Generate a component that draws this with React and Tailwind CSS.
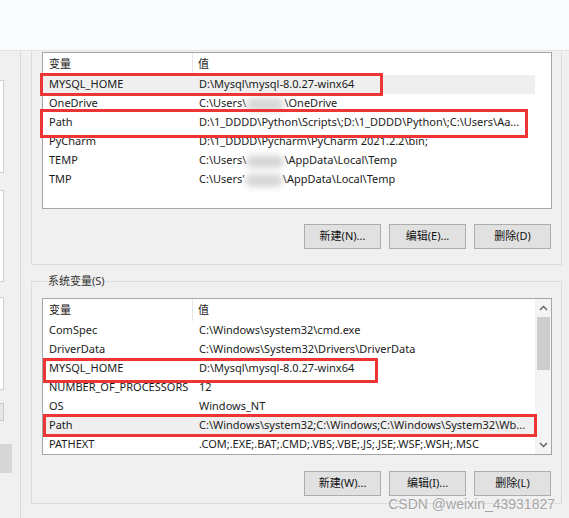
import React from "react";

const userVars = [
  { name: "MYSQL_HOME", value: "D:\\Mysql\\mysql-8.0.27-winx64", selected: true },
  { name: "OneDrive", value: ["C:\\Users\\", "\\OneDrive"] },
  { name: "Path", value: "D:\\1_DDDD\\Python\\Scripts\\;D:\\1_DDDD\\Python\\;C:\\Users\\Aa..." },
  { name: "PyCharm", value: "D:\\1_DDDD\\Pycharm\\PyCharm 2021.2.2\\bin;" },
  { name: "TEMP", value: ["C:\\Users\\", "\\AppData\\Local\\Temp"] },
  { name: "TMP", value: ["C:\\Users'", "\\AppData\\Local\\Temp"] },
];

const systemVars = [
  { name: "ComSpec", value: "C:\\Windows\\system32\\cmd.exe" },
  { name: "DriverData", value: "C:\\Windows\\System32\\Drivers\\DriverData" },
  { name: "MYSQL_HOME", value: "D:\\Mysql\\mysql-8.0.27-winx64" },
  { name: "NUMBER_OF_PROCESSORS", value: "12" },
  { name: "OS", value: "Windows_NT" },
  { name: "Path", value: "C:\\Windows\\system32;C:\\Windows;C:\\Windows\\System32\\Wb...", selected: true },
  { name: "PATHEXT", value: ".COM;.EXE;.BAT;.CMD;.VBS;.VBE;.JS;.JSE;.WSF;.WSH;.MSC" },
];

// blurred-out user name
const Smudge = () => (
  <span className="inline-block w-[38px] h-[13px] align-middle bg-[#d6d6d6] rounded-full blur-[3px]" />
);

const Value = ({ value }) => {
  if (Array.isArray(value)) {
    return (
      <>
        {value[0]}
        <Smudge />
        {value[1]}
      </>
    );
  }
  return value;
};

const VarList = ({ rows, scroll, marks }) => (
  <div className="relative h-[157px] border border-[#a6a6a6] bg-white flex min-w-0">
    <div className="flex-1 min-w-0 overflow-hidden flex flex-col">
      {/* header */}
      <div className="h-[22px] flex items-center shrink-0">
        <div className="w-[150px] shrink-0 h-full pl-[6px] flex items-center border-r border-[#e5e5e5]">变量</div>
        <div className="pl-[5px]">值</div>
      </div>
      {rows.map((r) => (
        <div
          key={r.name}
          className={`h-[19px] flex items-center shrink-0 whitespace-nowrap ${r.selected ? "bg-[#efefef]" : ""}`}
        >
          <div className="w-[150px] shrink-0 pl-[6px]">{r.name}</div>
          <div className="pl-[6px]">
            <Value value={r.value} />
          </div>
        </div>
      ))}
    </div>
    {/* scrollbar column */}
    <div className={`w-[16px] shrink-0 flex flex-col items-center ${scroll ? "bg-[#f4f4f4]" : ""}`}>
      {scroll && (
        <>
          <svg width="9" height="6" viewBox="0 0 9 6" className="mt-[6px]">
            <path d="M1 5 L4.5 1.5 L8 5" stroke="#606060" strokeWidth="1.4" fill="none" />
          </svg>
          <div className="mt-[6px] w-[13px] h-[53px] bg-[#cdcdcd]" />
          <div className="flex-1" />
          <svg width="9" height="6" viewBox="0 0 9 6" className="mb-[6px]">
            <path d="M1 1 L4.5 4.5 L8 1" stroke="#606060" strokeWidth="1.4" fill="none" />
          </svg>
        </>
      )}
    </div>
    {/* red annotation boxes */}
    {marks.map((m, i) => (
      <div key={i} className={`absolute border-[3px] border-[#ee3535] ${m}`} />
    ))}
  </div>
);

const Buttons = ({ labels }) => (
  <div className="flex justify-end gap-[8px] pr-[1px]">
    {labels.map((l) => (
      <div
        key={l}
        className="w-[77px] h-[25px] flex items-center justify-center bg-[#e1e1e1] border border-[#adadad] text-[#111]"
      >
        {l}
      </div>
    ))}
  </div>
);

export default function App() {
  return (
    <div
      className="relative w-[569px] h-[518px] overflow-hidden bg-[#f0f0f0] text-[11px] text-[#1b1b1b] flex flex-col"
      style={{ fontFamily: '"Noto Sans", "Noto Sans CJK SC", sans-serif' }}
    >
      {/* top strip */}
      <div className="h-[51px] shrink-0 bg-[#fafbfc] border-b border-[#e4e4e4]" />

      <div className="flex-1 flex min-w-0">
        {/* background window edge */}
        <div className="w-[21px] shrink-0 border-r border-[#d9d9d9] flex flex-col">
          <div className="w-[4px] h-[29px]" />
          <div className="w-[4px] h-[93px] bg-white border-r border-y border-[#d0d0d0]" />
          <div className="w-[4px] h-[17px]" />
          <div className="w-[4px] h-[92px] bg-white border-r border-y border-[#d0d0d0]" />
          <div className="w-[4px] h-[15px]" />
          <div className="w-[4px] h-[93px] bg-white border-r border-y border-[#d0d0d0]" />
          <div className="w-[4px] h-[13px]" />
          <div className="w-[4px] h-[18px] bg-[#e6e6e6] border-r border-y border-[#c8c8c8]" />
          <div className="w-[4px] h-[23px]" />
          <div className="w-[12px] h-[29px] bg-[#d6d6d6]" />
        </div>

        {/* dialog body */}
        <div className="flex-1 min-w-0 pl-[10px] pr-[7px]">
          {/* user variables group */}
          <div className="border-x border-b border-[#dcdcdc] pl-[10px] pr-[9px] pt-px pb-[15px]">
            <VarList
              rows={userVars}
              marks={["left-[-3px] top-[20px] w-[343px] h-[23px]", "left-[-3px] top-[56px] w-[488px] h-[29px]"]}
            />
            <div className="mt-[15px]">
              <Buttons labels={["新建(N)...", "编辑(E)...", "删除(D)"]} />
            </div>
          </div>

          {/* system variables group */}
          <fieldset className="min-w-0 mt-[8px] border border-[#dcdcdc] pl-[10px] pr-[9px] pb-[7px]">
            <legend className="ml-[5px] px-[1px] leading-[16px] text-[#333]">系统变量(S)</legend>
            <div className="mt-[9px]">
              <VarList
                rows={systemVars}
                scroll
                marks={["left-[0px] top-[59px] w-[335px] h-[25px]", "left-[0px] top-[115px] w-[494px] h-[23px]"]}
              />
            </div>
            <div className="mt-[16px]">
              <Buttons labels={["新建(W)...", "编辑(I)...", "删除(L)"]} />
            </div>
          </fieldset>
        </div>
      </div>

      {/* watermark */}
      <div
        className="absolute right-[14px] bottom-[3px] text-[14px] text-[#a3a3a3] [text-shadow:0_0_2px_#fff]"
        style={{ fontFamily: '"Liberation Sans", sans-serif' }}
      >
        CSDN @weixin_43931827
      </div>
    </div>
  );
}
